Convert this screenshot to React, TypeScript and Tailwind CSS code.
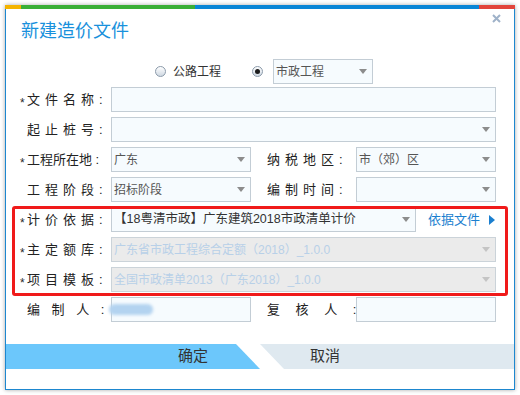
const font = {fontFamily: '"Liberation Sans", "Noto Sans CJK SC", sans-serif'};

const Arrow = ({disabled}: {disabled?: boolean}) => (
  <svg width="8" height="5" viewBox="0 0 8 5" className="shrink-0">
    <path d="M0 0 L8 0 L4 5 Z" fill={disabled ? "#c4c4c4" : "#8c8c8c"} />
  </svg>
);

const Label = ({text, star, className = "w-[91px] tracking-[5px]"}: {text: string; star?: boolean; className?: string}) => (
  <div className={`flex items-center shrink-0 text-[13px] text-[#222] ${className}`}>
    <span className={`w-[7px] shrink-0 text-[12px] leading-none tracking-normal text-[#2a2a2a] translate-y-[3px] ${star ? "" : "invisible"}`}>*</span>
    <span className="whitespace-pre">{text}</span>
  </div>
);

const Field = ({value = "", select, disabled, width}: {value?: string; select?: boolean; disabled?: boolean; width: string}) => (
  <div
    className={`${width} h-[25px] shrink-0 flex items-center pl-[2px] pr-[5px] border text-[12px] ${
      disabled ? "bg-[#ebebeb] border-[#cbd3d9] text-[#b8d0e8]" : "bg-[#f6fbfe] border-[#c3cdd5] text-[#555]"
    }`}
  >
    <span className="flex-1 truncate whitespace-pre">{value}</span>
    {select && <Arrow disabled={disabled} />}
  </div>
);

const Radio = ({checked}: {checked?: boolean}) => (
  <div className="w-[11px] h-[11px] rounded-full border border-[#8b9aaa] bg-gradient-to-b from-[#ffffff] to-[#cfd8e2] flex items-center justify-center shrink-0">
    {checked && <div className="w-[5px] h-[5px] rounded-full bg-[#1c1c1c]" />}
  </div>
);

export default function App() {
  return (
    <div className="w-[520px] h-[395px] bg-white pt-[5px] pl-[5px]" style={font}>
      <div className="relative w-[510px] h-[385px] bg-white border-x border-b border-[#1d87cf] shadow-[0_0_4px_rgba(0,0,0,0.35)] flex flex-col">
        {/* top colour bar */}
        <div className="flex h-[4px] -mx-px shrink-0">
          <div className="w-[16px] bg-[#f4b400]" />
          <div className="w-[174px] bg-[#3aaf36]" />
          <div className="flex-1 bg-[#0a86d6]" />
          <div className="w-[36px] bg-[#e2443b]" />
        </div>

        <div className="absolute right-[13px] top-[9px]">
          <svg width="9" height="9" viewBox="0 0 9 9">
            <path d="M1 1 L8 8 M8 1 L1 8" stroke="#9fb2c9" strokeWidth="2" />
          </svg>
        </div>

        <div className="mt-[10px] h-[24px] pl-[15px] text-[18px] leading-[24px] text-[#1991dc]">新建造价文件</div>

        {/* project type */}
        <div className="mt-[16px] h-[25px] flex items-center pl-[149px] text-[12px] text-[#333]">
          <Radio />
          <span className="ml-[7px] w-[49px] whitespace-nowrap">公路工程</span>
          <div className="ml-[30px]">
            <Radio checked />
          </div>
          <div className="ml-[10px]">
            <Field value="市政工程" select width="w-[100px]" />
          </div>
        </div>

        <div className="flex flex-col gap-[5px] mt-[3px] pl-[14px]">
          <div className="flex items-center">
            <Label text="文件名称:" star />
            <Field width="w-[385px]" />
          </div>
          <div className="flex items-center">
            <Label text="起止桩号:" />
            <Field select width="w-[385px]" />
          </div>
          <div className="flex items-center">
            <Label text="工程所在地 :" star className="w-[91px] tracking-[0px]" />
            <Field value="广东" select width="w-[140px]" />
            <div className="ml-[9px]">
              <Label text="纳税地区:" className="w-[96px] tracking-[5px]" />
            </div>
            <Field value="市（郊）区" select width="w-[140px]" />
          </div>
          <div className="flex items-center">
            <Label text="工程阶段:" />
            <Field value="招标阶段" select width="w-[140px]" />
            <div className="ml-[9px]">
              <Label text="编制时间:" className="w-[96px] tracking-[5px]" />
            </div>
            <Field select width="w-[140px]" />
          </div>

          {/* highlighted block */}
          <div className="relative flex flex-col gap-[5px]">
            <div className="flex items-center">
              <Label text="计价依据:" star />
              <div className="w-[305px] h-[25px] shrink-0 flex items-center pl-[2px] pr-[5px] border bg-[#f6fbfe] border-[#c3cdd5] text-[12.5px] text-[#333]">
                <span className="flex-1 truncate">【18粤清市政】广东建筑2018市政清单计价</span>
                <Arrow />
              </div>
              <div className="ml-[12px] flex items-center gap-[9px] text-[13px] text-[#1b7fcf]">
                <span>依据文件</span>
                <svg width="6" height="10" viewBox="0 0 6 10">
                  <path d="M0 0 L6 5 L0 10 Z" fill="#1b7fcf" />
                </svg>
              </div>
            </div>
            <div className="flex items-center">
              <Label text="主定额库:" star />
              <Field value="广东省市政工程综合定额（2018）_1.0.0" select disabled width="w-[385px]" />
            </div>
            <div className="flex items-center">
              <Label text="项目模板:" star />
              <Field value="全国市政清单2013（广东2018）_1.0.0" select disabled width="w-[385px]" />
            </div>
            <div className="absolute left-[-8px] top-[-1px] w-[496px] h-[90px] border-[3px] border-[#f01a1a] rounded-[3px]" />
          </div>

          <div className="flex items-center">
            <Label text="编 制 人 :" className="w-[91px] tracking-[4px]" />
            <div className="w-[140px] h-[25px] shrink-0 flex items-center border bg-[#f6fbfe] border-[#c3cdd5]">
              <div className="-ml-[3px] w-[44px] h-[11px] rounded-full bg-[#b3d3f0] blur-[1.5px]" />
            </div>
            <div className="ml-[9px]">
              <Label text="复 核 人 :" className="w-[96px] tracking-[6px]" />
            </div>
            <Field width="w-[140px]" />
          </div>
        </div>

        {/* buttons */}
        <div className="mt-[22px] h-[25px] flex text-[15px] text-[#333]">
          <div className="w-[254px] bg-[#6cc7fb] flex items-center justify-center pl-[120px] [clip-path:polygon(0_0,calc(100%-24px)_0,100%_100%,0_100%)]">
            确定
          </div>
          <div className="flex-1 bg-[#dfe9f0] flex items-center pl-[50px] [clip-path:polygon(0_0,100%_0,100%_100%,24px_100%)]">
            取消
          </div>
        </div>
      </div>
    </div>
  );
}
